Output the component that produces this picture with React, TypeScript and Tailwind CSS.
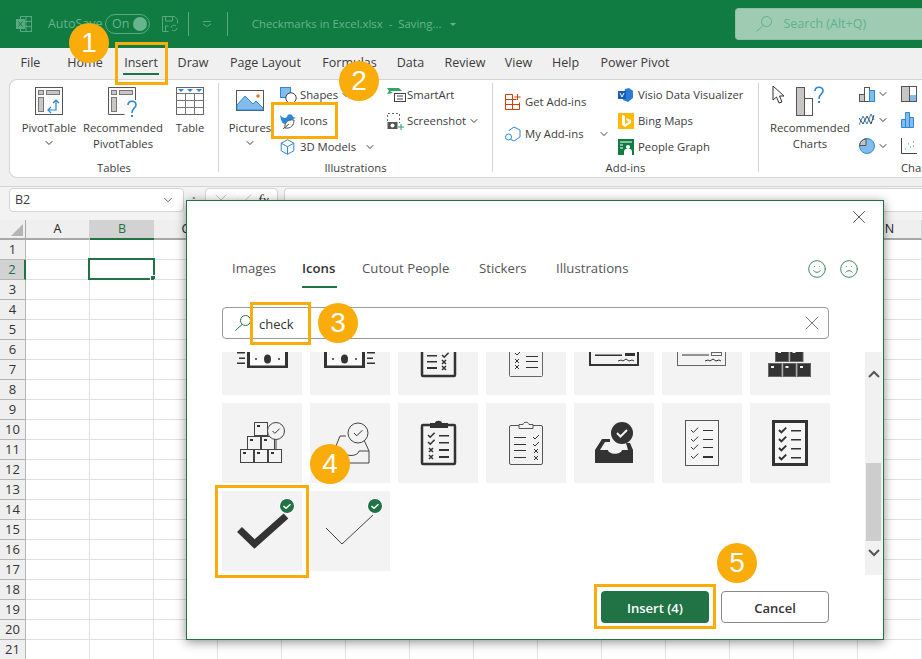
import { Check, ChevronDown, Frown, Smile, X } from "lucide-react";
import type { ReactNode } from "react";

const DARK = "#333333";

const tabs = [
  { label: "File", cls: "w-[19px] ml-[21px]" },
  { label: "Home", cls: "w-[34px] ml-[28px]" },
  { label: "Insert", cls: "w-[36px] ml-[21px]" },
  { label: "Draw", cls: "w-[30px] ml-[19px]" },
  { label: "Page Layout", cls: "w-[71px] ml-[22px]" },
  { label: "Formulas", cls: "w-[53px] ml-[22px]" },
  { label: "Data", cls: "w-[27px] ml-[21px]" },
  { label: "Review", cls: "w-[40px] ml-[21px]" },
  { label: "View", cls: "w-[27px] ml-[20px]" },
  { label: "Help", cls: "w-[27px] ml-[20px]" },
  { label: "Power Pivot", cls: "w-[68px] ml-[22px]" },
];

const columns = ["A", "B", "C", "D", "E", "F", "G", "H", "I", "J", "K", "L", "M", "N"];
const rows = Array.from({ length: 21 }, (_, i) => i + 1);

const Tick = ({ x, y, s = 1, w = 1 }: { x: number; y: number; s?: number; w?: number }) => (
  <path d={`M${x} ${y}l${2 * s} ${2 * s}l${4 * s} ${-4 * s}`} fill="none" stroke={DARK} strokeWidth={w} />
);

const Cross = ({ x, y, w = 1 }: { x: number; y: number; w?: number }) => (
  <path d={`M${x} ${y}l4 4M${x + 4} ${y}l-4 4`} fill="none" stroke={DARK} strokeWidth={w} />
);

const Bar = ({ x, y, l, h = 1 }: { x: number; y: number; l: number; h?: number }) => (
  <rect x={x} y={y} width={l} height={h} fill={DARK} />
);

const Cell = ({ children }: { children?: ReactNode }) => (
  <div className="w-20 h-20 bg-[#f3f3f3]">
    <svg viewBox="0 0 80 80" className="w-20 h-20">
      {children}
    </svg>
  </div>
);

const Badge = () => (
  <>
    <circle cx="65" cy="15" r="8" fill="#ffffff" />
    <circle cx="65" cy="15" r="7" fill="#217346" />
    <path d="M61.5 15l2.5 2.3 4.5-4" fill="none" stroke="#ffffff" strokeWidth="1.4" />
  </>
);

const Box = ({ x, y, fill = false }: { x: number; y: number; fill?: boolean }) => (
  <>
    <rect x={x + 0.5} y={y + 0.5} width="13" height="13" fill={fill ? DARK : "none"} stroke={fill ? "#666666" : "#444444"} />
    <rect x={x + 3} y={y + 3} width="3" height="2" fill={fill ? "#eeeeee" : DARK} />
  </>
);

const Glass = ({ stroke, cls }: { stroke: string; cls: string }) => (
  <svg width="16" height="16" viewBox="0 0 16 16" className={cls} fill="none" stroke={stroke}>
    <circle cx="10.5" cy="5.5" r="5" />
    <path d="M7 9.500L.5 15.500" />
  </svg>
);

const PivotIcon = () => (
  <svg width="28" height="28" viewBox="0 0 28 28">
    <rect x="0.5" y="0.5" width="27" height="27" fill="#fafafa" stroke="#555555" />
    <rect x="3.5" y="3.5" width="5" height="4" fill="#c8c6c4" stroke="#777777" />
    <rect x="11.5" y="3.5" width="13" height="4" fill="#c8c6c4" stroke="#777777" />
    <rect x="3.5" y="10.5" width="5" height="14" fill="#c8c6c4" stroke="#777777" />
    <path d="M13 23h8v-10M18 16l3-3 3 3M16 20l-3 3 3 3" fill="none" stroke="#2b88d8" strokeWidth="1.2" />
  </svg>
);

const RecPivotIcon = () => (
  <svg width="30" height="32" viewBox="0 0 30 32">
    <path d="M27.5 13V.5H.5v27h16" fill="#fafafa" stroke="#555555" />
    <rect x="3.5" y="3.5" width="5" height="4" fill="#c8c6c4" stroke="#777777" />
    <rect x="11.5" y="3.5" width="13" height="4" fill="#c8c6c4" stroke="#777777" />
    <rect x="3.5" y="10.5" width="5" height="14" fill="#c8c6c4" stroke="#777777" />
    <path d="M20 18c0-5 8-5 8 0 0 3-4 3-4 8" fill="none" stroke="#2b88d8" strokeWidth="1.6" />
    <rect x="23" y="28" width="2" height="2" fill="#2b88d8" />
  </svg>
);

const TableIcon = () => (
  <svg width="28" height="28" viewBox="0 0 28 28">
    <rect x="0.5" y="0.5" width="27" height="27" fill="#ffffff" stroke="#666666" />
    <path d="M.5 6.5h27M.5 13.5h27M.5 20.5h27M9.5 6v22M18.5 6v22" stroke="#777777" fill="none" />
    <path d="M2 2h6l-3 3zM11 2h6l-3 3zM20 2h6l-3 3z" fill="#2b88d8" />
  </svg>
);

const PicturesIcon = () => (
  <svg width="28" height="22" viewBox="0 0 28 22">
    <rect x="0.5" y="0.5" width="27" height="20" fill="#ffffff" stroke="#555555" />
    <path d="M1 20V15l8-9 8 8 3-3 7 7v2z" fill="#83bbeb" stroke="#2b88d8" />
    <circle cx="22" cy="6" r="1.8" fill="#e8792b" />
  </svg>
);

const ShapesIcon = () => (
  <svg width="17" height="17" viewBox="0 0 17 17">
    <rect x="0.5" y="0.5" width="10" height="10" fill="#83bbeb" stroke="#2b88d8" />
    <circle cx="11" cy="11" r="5.2" fill="#ffffff" stroke="#444444" />
  </svg>
);

const BirdIcon = () => (
  <svg width="16" height="16" viewBox="0 0 16 16">
    <path d="M0 2c2 2 3 3 5 3l2-1c0-3 5-4 6 0l3 1-3 1c0 3-2 5-5 5H5C2 11 1 7 0 2z" fill="#2b88d8" />
    <path d="M5 15c-1-4 2-9 9-8 0 5-3 9-9 8zM3 16l6-5" fill="#ffffff" stroke="#555555" />
  </svg>
);

const CubeIcon = () => (
  <svg width="15" height="16" viewBox="0 0 15 16">
    <path d="M7.5.7l6.3 3.5v7.6l-6.3 3.5-6.3-3.5V4.2zM1.2 4.2l6.3 3.5 6.3-3.5M7.5 7.7v7.6" fill="none" stroke="#2b88d8" />
  </svg>
);

const SmartArtIcon = () => (
  <svg width="20" height="16" viewBox="0 0 20 16">
    <path d="M0 1h12l3 3H3l3 2-6 1 2-3z" fill="#33a36a" />
    <rect x="7.5" y="6.5" width="11" height="8" fill="#ffffff" stroke="#444444" />
    <path d="M10 9h6M10 12h6" stroke="#444444" />
  </svg>
);

const ScreenshotIcon = () => (
  <svg width="17" height="17" viewBox="0 0 17 17">
    <path d="M.5 8V.5h12V10" fill="none" stroke="#666666" strokeDasharray="2 2" />
    <rect x="0.5" y="9" width="10" height="7" fill="#555555" />
    <circle cx="5.5" cy="12.5" r="2" fill="#ffffff" />
    <path d="M14 11v6M11 14h6" stroke="#21a366" />
  </svg>
);

const GetAddIcon = () => (
  <svg width="16" height="16" viewBox="0 0 16 16">
    <path d="M11.5 5.5h-11v10h14v-7M.5 10.5h14M7.5 5.5v10M7.5 5.5V.5h-7v5" fill="none" stroke="#d83b01" />
    <path d="M12.5 0v6M9.5 3h6" stroke="#d83b01" />
  </svg>
);

const MyAddIcon = () => (
  <svg width="16" height="16" viewBox="0 0 16 16">
    <path d="M4 5V4.5L9 1l6 3v7l-6 4-3-1.5" fill="none" stroke="#2b88d8" />
    <circle cx="3.5" cy="11" r="3" fill="#ffffff" stroke="#2b88d8" />
  </svg>
);

const VisioIcon = () => (
  <svg width="15" height="14" viewBox="0 0 15 14">
    <path d="M7 1l4-1 4 3v7l-5 4-5-2z" fill="#2b7cd3" />
    <rect x="0" y="3" width="8" height="8" fill="#185abd" />
    <path d="M2 5l2 4 2-4" stroke="#ffffff" fill="none" />
  </svg>
);

const BingIcon = () => (
  <svg width="16" height="16" viewBox="0 0 16 16">
    <rect width="16" height="16" fill="#ffb900" />
    <path d="M4 2l3 1v8l4-2-2-1-1-3 5 2v3l-6 4-3-2z" fill="#ffffff" />
  </svg>
);

const PeopleIcon = () => (
  <svg width="16" height="16" viewBox="0 0 16 16">
    <rect width="16" height="16" fill="#107c41" />
    <path d="M2 3h12M2 6h3M2 9h3" stroke="#ffffff" />
    <circle cx="10" cy="8" r="2" fill="#ffffff" />
    <path d="M6 16v-3c0-2 1-3 2-3h4c1 0 2 1 2 3v3z" fill="#ffffff" />
  </svg>
);

const CursorIcon = () => (
  <svg width="14" height="22" viewBox="0 0 14 22" className="shrink-0">
    <path d="M1 1v14l3.5-3 2.5 6 3-1-2.5-6H12z" fill="#ffffff" stroke="#333333" />
  </svg>
);

const RecChartIcon = () => (
  <svg width="30" height="30" viewBox="0 0 30 30" className="mt-[1px]">
    <rect x="0.5" y="1.5" width="8" height="28" fill="#c8c6c4" stroke="#555555" />
    <rect x="8.5" y="12.5" width="8" height="17" fill="#ffffff" stroke="#555555" />
    <path d="M19 5c0-5 8-5 8 0 0 3-4 3-4 8" fill="none" stroke="#2b88d8" strokeWidth="1.6" />
    <rect x="22" y="15" width="2" height="2" fill="#2b88d8" />
  </svg>
);

const ColumnChartIcon = () => (
  <svg width="16" height="16" viewBox="0 0 16 16">
    <rect x="0.5" y="8.5" width="5" height="7" fill="#c8c6c4" stroke="#555555" />
    <rect x="5.5" y="1.5" width="5" height="14" fill="#ffffff" stroke="#555555" />
    <rect x="10.5" y="4.5" width="5" height="11" fill="#83bbeb" stroke="#2b88d8" />
  </svg>
);

const LineChartIcon = () => (
  <svg width="16" height="16" viewBox="0 0 16 14">
    <path d="M0 12L4 3l4 8 4-10 3 6" fill="none" stroke="#2b88d8" />
    <path d="M0 5l4 6 4-8 4 8 3-9" fill="none" stroke="#444444" />
  </svg>
);

const PieChartIcon = () => (
  <svg width="16" height="16" viewBox="0 0 16 16">
    <circle cx="8" cy="8" r="7.5" fill="#83bbeb" stroke="#2b88d8" />
    <path d="M7 1a7 7 0 0 0-6.5 6.5H7z" fill="#c8c6c4" stroke="#555555" />
  </svg>
);

const TreeIcon = () => (
  <svg width="16" height="16" viewBox="0 0 16 16">
    <rect x="0.5" y="0.5" width="15" height="15" fill="#ffffff" stroke="#555555" />
    <rect x="1" y="1" width="7" height="14" fill="#c8c6c4" />
    <rect x="8" y="9" width="7" height="6" fill="#83bbeb" />
    <path d="M8.5 1v14" stroke="#555555" />
  </svg>
);

const HistIcon = () => (
  <svg width="14" height="16" viewBox="0 0 14 16">
    <path d="M.5 15.5v-8h4v-3h0v-4h4v5h4v10z" fill="#83bbeb" stroke="#2b88d8" />
    <path d="M4.5 7v8M8.5 5v10" stroke="#2b88d8" />
  </svg>
);

const ScatterIcon = () => (
  <svg width="16" height="16" viewBox="0 0 16 16">
    <path d="M.5 0v15.5H16" fill="none" stroke="#444444" />
    <path d="M4 11h1M7 6h1M9 9h1M12 4h1M12 8h1" stroke="#2b88d8" />
  </svg>
);

const Small = ({ icon, label, chevron, cls }: { icon: ReactNode; label: string; chevron?: string; cls: string }) => (
  <div className={`flex items-center ${cls}`}>
    <div className="w-5 flex shrink-0">{icon}</div>
    <span className="whitespace-nowrap">{label}</span>
    {chevron && <ChevronDown className={`w-3 h-3 ${chevron}`} strokeWidth={2} />}
  </div>
);

const Large = ({ icon, lines, cls, chevron }: { icon: ReactNode; lines: string[]; cls: string; chevron?: boolean }) => (
  <div className={`flex flex-col items-center pt-[7px] shrink-0 ${cls}`}>
    <div className="h-[33px] flex items-start justify-center">{icon}</div>
    {lines.map((line) => (
      <div key={line} className="h-4 leading-4 whitespace-nowrap">
        {line}
      </div>
    ))}
    {chevron && <ChevronDown className="w-3 h-3 mt-[1px]" strokeWidth={2} />}
  </div>
);

const Group = ({ cls, label, children }: { cls: string; label: string; children: ReactNode }) => (
  <div className={`flex flex-col shrink-0 ${cls}`}>
    <div className="flex h-20">{children}</div>
    <div className="h-4 leading-4 text-center">{label}</div>
  </div>
);

const Divider = () => <div className="w-px h-[89px] mt-[3px] bg-[#d4d4d4] shrink-0" />;

const Numbered = ({ n, cls }: { n: number; cls: string }) => (
  <div
    className={`absolute z-30 w-10 h-10 rounded-full bg-[#f9ac0a] text-white flex items-center justify-center text-[28px] font-['Liberation_Sans',sans-serif] ${cls}`}
  >
    {n}
  </div>
);

const Frame = ({ cls }: { cls: string }) => <div className={`absolute z-20 border-[3px] border-[#f9ac0a] ${cls}`} />;

function App() {
  return (
    <div className="relative w-[922px] h-[659px] overflow-hidden bg-white text-[#3b3b3b] text-[11.3px] font-['Open_Sans',sans-serif]">
      {/* title bar */}
      <div className="h-12 bg-[#107c41] flex items-center text-[#67b48f] text-[12.5px]">
        <svg width="16" height="16" viewBox="0 0 16 16" className="ml-4">
          <rect x="4.5" y="0.5" width="11" height="15" fill="none" stroke="#5aa983" />
          <path d="M4 5.5h11M4 10.5h11M10 1v14" stroke="#5aa983" />
          <rect x="0" y="3" width="9" height="10" fill="#5aa983" />
          <path d="M2.5 5.5l4 5M6.5 5.5l-4 5" stroke="#107c41" />
        </svg>
        <span className="ml-4 w-[50px] whitespace-nowrap">AutoSave</span>
        <div className="ml-[7px] w-[45px] h-5 rounded-full border border-[#5aa983] flex items-center justify-between pl-[6px] pr-[2px] text-[12.5px]">
          <span>On</span>
          <span className="w-[14px] h-[14px] rounded-full bg-[#67b48f]" />
        </div>
        <svg width="16" height="16" viewBox="0 0 16 16" className="ml-3" fill="none" stroke="#5aa983">
          <path d="M.5.5h12l3 3v4M.5.5v15h6M3.5 1v4h7V1M3.5 15v-5h3" />
          <path d="M9 12a3 3 0 0 1 5-2M15 12a3 3 0 0 1-5 2" />
        </svg>
        <div className="ml-[10px] w-px h-6 bg-[#5aa983]" />
        <svg width="8" height="6" viewBox="0 0 8 6" className="ml-[14px]" fill="none" stroke="#5aa983">
          <path d="M0 .5h8M0 3l4 2.5L8 3" />
        </svg>
        <div className="ml-[16px] w-px h-6 bg-[#5aa983]" />
        <span className="ml-6 w-[190px] whitespace-nowrap text-[11.4px]">Checkmarks in Excel.xlsx&nbsp; -&nbsp; Saving...</span>
        <svg width="6" height="3" viewBox="0 0 6 3" className="ml-[8px]">
          <path d="M0 0h6L3 3z" fill="#67b48f" />
        </svg>
        <div className="ml-[279px] w-[188px] h-8 bg-[#9fcbb3] rounded-l border border-[#8dc0a4] border-r-0 flex items-center pl-[20px] text-[#5cb38a]">
          <Glass stroke="#5cb38a" cls="shrink-0" />
          <span className="ml-[12px] pt-[1px]">Search (Alt+Q)</span>
        </div>
      </div>

      {/* ribbon tabs */}
      <div className="bg-[#f0f0f0]">
        <div className="h-[31px] flex text-[12.5px]">
          {tabs.map((tab) => (
            <div key={tab.label} className={`relative shrink-0 text-center whitespace-nowrap pt-[6px] flex justify-center ${tab.cls}`}>
              {tab.label}
              {tab.label === "Insert" && <div className="absolute left-0 right-0 top-[25px] h-[2px] bg-[#217346]" />}
            </div>
          ))}
        </div>

        {/* ribbon */}
        <div className="ml-[9px] h-[99px] bg-white rounded-l-lg border border-r-0 border-[#d4d4d4] flex overflow-hidden">
          <Group cls="w-[208px]" label="Tables">
            <Large cls="ml-[9px] w-[60px]" icon={<PivotIcon />} lines={["PivotTable"]} chevron />
            <Large cls="w-[88px]" icon={<RecPivotIcon />} lines={["Recommended", "PivotTables"]} />
            <Large cls="w-[46px]" icon={<TableIcon />} lines={["Table"]} />
          </Group>
          <Divider />
          <Group cls="w-[273px]" label="Illustrations">
            <Large cls="ml-[6px] w-[50px]" icon={<div className="pt-[3px]"><PicturesIcon /></div>} lines={["Pictures"]} chevron />
            <div className="ml-[5px] w-[107px] pt-[2px]">
              <Small cls="h-[26px]" icon={<ShapesIcon />} label="Shapes" chevron="ml-[2px]" />
              <Small cls="h-[26px]" icon={<BirdIcon />} label="Icons" />
              <Small cls="h-[26px]" icon={<CubeIcon />} label="3D Models" chevron="ml-[8px]" />
            </div>
            <div className="pt-[2px]">
              <Small cls="h-[26px]" icon={<SmartArtIcon />} label="SmartArt" />
              <Small cls="h-[26px]" icon={<ScreenshotIcon />} label="Screenshot" chevron="ml-[2px]" />
            </div>
          </Group>
          <Divider />
          <Group cls="w-[265px]" label="Add-ins">
            <div className="ml-[12px] w-[113px] pt-[6px]">
              <div className="h-8 flex items-center gap-[4px]">
                <GetAddIcon />
                <span className="whitespace-nowrap">Get Add-ins</span>
              </div>
              <div className="h-8 flex items-center gap-[4px]">
                <MyAddIcon />
                <span className="whitespace-nowrap">My Add-ins</span>
                <ChevronDown className="w-3 h-3 ml-[10px]" strokeWidth={2} />
              </div>
            </div>
            <div className="pt-[2px]">
              <Small cls="h-[26px]" icon={<VisioIcon />} label="Visio Data Visualizer" />
              <Small cls="h-[26px]" icon={<BingIcon />} label="Bing Maps" />
              <Small cls="h-[26px]" icon={<PeopleIcon />} label="People Graph" />
            </div>
          </Group>
          <Divider />
          <div className="flex flex-col shrink-0">
            <div className="flex h-20">
              <div className="w-[84px] ml-[9px] flex flex-col items-center pt-[5px] shrink-0">
                <div className="h-[35px] w-full flex gap-[10px] pl-[4px]">
                  <CursorIcon />
                  <RecChartIcon />
                </div>
                <div className="h-4 leading-4 whitespace-nowrap">Recommended</div>
                <div className="h-4 leading-4">Charts</div>
              </div>
              <div className="ml-[7px] pt-[1px] w-[42px] shrink-0">
                <Small cls="h-[26px]" icon={<ColumnChartIcon />} label="" chevron="-ml-[2px]" />
                <Small cls="h-[26px]" icon={<LineChartIcon />} label="" chevron="-ml-[2px]" />
                <Small cls="h-[26px]" icon={<PieChartIcon />} label="" chevron="-ml-[2px]" />
              </div>
              <div className="pt-[1px] w-5 shrink-0">
                <div className="h-[26px] flex items-center"><TreeIcon /></div>
                <div className="h-[26px] flex items-center"><HistIcon /></div>
                <div className="h-[26px] flex items-center"><ScatterIcon /></div>
              </div>
            </div>
            <div className="h-4 leading-4 pl-[142px]">Charts</div>
          </div>
        </div>

        {/* formula bar */}
        <div className="h-[8px]" />
        <div className="h-[34px] border-t border-[#d4d4d4] flex items-start pt-[1px] bg-[#f3f3f3] text-[12.5px]">
          <div className="ml-[9px] w-[175px] h-6 bg-white rounded border border-[#d4d4d4] flex items-center justify-between pl-[5px] pr-[8px]">
            <span>B2</span>
            <ChevronDown className="w-[14px] h-[14px] text-[#555555]" strokeWidth={1.5} />
          </div>
          <span className="ml-[8px] w-[13px] leading-6 font-bold text-[#888888]">:</span>
          <div className="w-[73px] h-6 bg-white rounded border border-[#d4d4d4] flex items-center pl-[5px] text-[#bbbbbb]">
            <X className="w-5 h-5" strokeWidth={1} />
            <Check className="ml-[3px] w-5 h-5" strokeWidth={1} />
            <span className="ml-[4px] italic font-['Liberation_Serif',serif] text-[15px] text-[#333333]">fx</span>
          </div>
          <div className="ml-[6px] flex-1 h-6 bg-white rounded-l border border-r-0 border-[#d4d4d4]" />
        </div>
      </div>

      {/* sheet */}
      <div className="text-[12.5px]">
        <div className="flex h-5">
          <div className="w-[26px] h-5 bg-[#efefef] border-r border-b-2 border-[#a8a8a8] shrink-0 flex items-end justify-end pr-[2px] pb-[2px]">
            <div className="w-0 h-0 border-l-[12px] border-b-[12px] border-l-transparent border-b-[#b5b5b5]" />
          </div>
          {columns.map((col) => (
            <div
              key={col}
              className={
                col === "B"
                  ? "w-16 h-5 shrink-0 text-center leading-[18px] bg-[#d2d2d2] border-b-2 border-[#217346] text-[#217346]"
                  : "w-16 h-5 shrink-0 text-center leading-[18px] bg-[#efefef] border-r border-b-2 border-r-[#d4d4d4] border-b-[#a8a8a8] text-[#222222]"
              }
            >
              {col}
            </div>
          ))}
        </div>
        {rows.map((row) => (
          <div key={row} className="relative flex h-5">
            <div
              className={
                row === 2
                  ? "w-[26px] h-5 shrink-0 text-center leading-[18px] text-[13px] bg-[#d2d2d2] border-r-2 border-b border-r-[#217346] border-b-[#b5b5b5] text-[#217346]"
                  : "w-[26px] h-5 shrink-0 text-center leading-[18px] text-[13px] bg-[#efefef] border-r border-b border-[#b5b5b5] text-[#333333]"
              }
            >
              {row}
            </div>
            {columns.map((col) => (
              <div key={col} className="relative w-16 h-5 shrink-0 border-r border-b border-[#e0e0e0]">
                {row === 2 && col === "B" && (
                  <div className="absolute -left-[2px] -top-[2px] w-[67px] h-[22px] border-2 border-[#217346]">
                    <div className="absolute -right-[3px] -bottom-[3px] w-[6px] h-[6px] bg-[#217346] border border-white" />
                  </div>
                )}
              </div>
            ))}
          </div>
        ))}
      </div>

      {/* icons dialog */}
      <div className="absolute z-10 left-[186px] top-[200px] w-[698px] h-[440px] bg-white border border-[#217346] shadow-[0_2px_10px_rgba(0,0,0,0.45)] flex flex-col">
        <div className="h-[31px] flex justify-end items-center pt-[1px] pr-[13px]">
          <X className="w-[22px] h-[22px] text-[#333333]" strokeWidth={0.9} />
        </div>
        <div className="h-[56px] pl-[45px] pr-[24px] flex items-start pt-[27px] text-[13.2px] text-[#555555]">
          <span className="w-[70px]">Images</span>
          <div className="w-[60px] relative font-semibold text-[#333333]">
            Icons
            <div className="absolute left-0 w-[35px] top-[27px] h-[2px] bg-[#217346]" />
          </div>
          <span className="w-[117px]">Cutout People</span>
          <span className="w-[77px]">Stickers</span>
          <span>Illustrations</span>
          <div className="ml-auto flex gap-3 text-[#217346]">
            <Smile className="w-5 h-5" strokeWidth={1} />
            <Frown className="w-5 h-5" strokeWidth={1} />
          </div>
        </div>
        <div className="ml-[35px] w-[607px] h-8 mt-[19px] rounded-sm border border-[#9a9a9a] flex items-center text-[13px] text-[#333333] shrink-0">
          <Glass stroke="#217346" cls="ml-[12px] shrink-0" />
          <span className="ml-[8px] pt-[3px]">check</span>
          <X className="ml-auto mr-[4px] w-6 h-6 text-[#555555]" strokeWidth={0.8} />
        </div>
        <div className="mt-[13px] h-[223px] flex shrink-0">
          <div className="w-[678px] pl-[35px] overflow-hidden">
            <div className="grid grid-cols-[repeat(7,80px)] gap-2 -mt-[37px]">
              <Cell>
                <rect x="25" y="28" width="41" height="25" fill="#333" />
                <rect x="28" y="31" width="35" height="19.5" fill="#fafafa" />
                <ellipse cx="45.5" cy="44" rx="3.5" ry="4.5" fill="#333" />
                <circle cx="34" cy="44" r="1" fill="#333" />
                <circle cx="57" cy="44" r="1" fill="#333" />
                <Bar x={15} y={37} l={8} h={1.5} />
                <Bar x={17} y={42.5} l={6} h={1.5} />
                <Bar x={15} y={47.5} l={8} h={1.5} />
              </Cell>
              <Cell>
                <rect x="14" y="28" width="41" height="25" fill="#333" />
                <rect x="17" y="31" width="35" height="19.5" fill="#fafafa" />
                <ellipse cx="34.5" cy="44" rx="3.5" ry="4.5" fill="#333" />
                <circle cx="23" cy="44" r="1" fill="#333" />
                <circle cx="46" cy="44" r="1" fill="#333" />
                <Bar x={57} y={37} l={8} h={1.5} />
                <Bar x={57} y={42.5} l={6} h={1.5} />
                <Bar x={57} y={47.5} l={8} h={1.5} />
              </Cell>
              <Cell>
                <rect x="24" y="22" width="33" height="39" rx="1" fill="none" stroke="#333" strokeWidth="2.5" />
                <Bar x={29} y={40} l={10} h={1.5} />
                <Bar x={29} y={46} l={10} h={1.5} />
                <Bar x={29} y={52} l={10} h={2} />
                <Tick x={44} y={40} s={1.1} w={1.6} />
                <Cross x={44} y={45} w={1.5} />
                <Cross x={44} y={51} w={1.5} />
              </Cell>
              <Cell>
                <rect x="23.5" y="22" width="33" height="39.5" rx="1" fill="none" stroke="#666" />
                <Tick x={29} y={38} />
                <Cross x={29} y={44} />
                <Cross x={29} y={50} />
                <Bar x={40} y={41} l={12} />
                <Bar x={40} y={46} l={12} />
                <Bar x={40} y={52} l={12} />
              </Cell>
              <Cell>
                <rect x="16" y="26" width="48" height="24" fill="none" stroke="#333" strokeWidth="2" />
                <Bar x={21} y={39.5} l={27} h={1.5} />
                <rect x="51" y="38" width="10" height="3" fill="#333" />
                <path d="M44 46l3-1 2 1 3-2 3 2 3-1 2 1" fill="none" stroke="#333" />
              </Cell>
              <Cell>
                <rect x="15.5" y="26" width="48" height="24.5" fill="none" stroke="#666" />
                <Bar x={20} y={39.5} l={27} h={1} />
                <rect x="49.5" y="37.5" width="10" height="3" fill="none" stroke="#666" />
                <path d="M43 46l3-1 2 1 3-2 3 2 3-1 2 1" fill="none" stroke="#333" />
              </Cell>
              <Cell>
                <Box x={25} y={33} fill />
                <Box x={39.5} y={33} fill />
                <Box x={18} y={48} fill />
                <Box x={32.5} y={48} fill />
                <Box x={47} y={48} fill />
              </Cell>

              <Cell>
                <Box x={32} y={19} />
                <Box x={25} y={33} />
                <Box x={39} y={33} />
                <Box x={18} y={46} />
                <Box x={32} y={46} />
                <Box x={46} y={46} />
                <path d="M54 37v9" stroke="#444" />
                <circle cx="54" cy="28" r="8.5" fill="#f3f3f3" stroke="#444" />
                <Tick x={50.5} y={28} s={1.2} w={1} />
              </Cell>
              <Cell>
                <path d="M36 33h-6l-6 15v12h35V48l-5-11M24 48h9c1 6 15 6 16 0h10" fill="none" stroke="#444" />
                <circle cx="48" cy="30" r="10" fill="#f3f3f3" stroke="#444" />
                <Tick x={44} y={30} s={1.4} w={1} />
              </Cell>
              <Cell>
                <rect x="24" y="22" width="33" height="39" rx="1" fill="none" stroke="#333" strokeWidth="2.5" />
                <path d="M32 20h5c0-3 7-3 7 0h6v5H32z" fill="#333" />
                <Tick x={30} y={32} s={1.1} w={1.6} />
                <Tick x={30} y={39} s={1.1} w={1.6} />
                <Cross x={31} y={45} w={1.5} />
                <Cross x={31} y={52} w={1.5} />
                <Bar x={41} y={32} l={10} h={1.5} />
                <Bar x={41} y={39} l={10} h={1.5} />
                <Bar x={41} y={46} l={10} h={2} />
                <Bar x={41} y={53} l={10} h={2} />
              </Cell>
              <Cell>
                <rect x="23.5" y="22.5" width="33" height="39" rx="1.5" fill="none" stroke="#555" />
                <path d="M33 25.5v-4h4c0-3 6-3 6 0h4v4z" fill="#f3f3f3" stroke="#555" />
                <Bar x={28} y={34} l={12} />
                <Bar x={28} y={41} l={12} />
                <Bar x={28} y={47} l={12} />
                <Bar x={28} y={54} l={12} />
                <Tick x={47} y={34} />
                <Tick x={47} y={41} />
                <Cross x={48} y={46} />
                <Cross x={48} y={53} />
              </Cell>
              <Cell>
                <path d="M21 60V47l7-11h8v3h-5l-5 8h8c1 5 13 5 14 0h6l-2-7h4l3 7v13z" fill="#333" />
                <circle cx="48" cy="30" r="11" fill="#333" />
                <path d="M43 30l3.5 3.5 6.5-6.5" fill="none" stroke="#f3f3f3" strokeWidth="2" />
              </Cell>
              <Cell>
                <rect x="23.5" y="17.5" width="33" height="45" fill="#f6f6f6" stroke="#555" />
                <Tick x={29} y={27} s={1.2} />
                <Tick x={29} y={36} s={1.2} />
                <Tick x={29} y={44} s={1.2} />
                <Tick x={29} y={53} s={1.2} />
                <Bar x={41} y={27} l={10} />
                <Bar x={41} y={36} l={10} />
                <Bar x={41} y={44} l={10} />
                <Bar x={41} y={53} l={10} h={2} />
              </Cell>
              <Cell>
                <rect x="23.5" y="18.5" width="33" height="43" fill="#f6f6f6" stroke="#333" strokeWidth="3" />
                <Tick x={29} y={27} s={1.2} w={2} />
                <Tick x={29} y={36} s={1.2} w={2} />
                <Tick x={29} y={45} s={1.2} w={2} />
                <Tick x={29} y={54} s={1.2} w={2} />
                <Bar x={41} y={27} l={10} h={1.5} />
                <Bar x={41} y={36} l={10} h={1.5} />
                <Bar x={41} y={45} l={10} h={1.5} />
                <Bar x={41} y={54} l={10} h={1.5} />
              </Cell>

              <Cell>
                <path d="M17.5 38.5L32.5 53 64 25" fill="none" stroke="#333" strokeWidth="7" />
                <Badge />
              </Cell>
              <Cell>
                <path d="M16 37l16 16 31-29" fill="none" stroke="#444" />
                <Badge />
              </Cell>
            </div>
          </div>
          <div className="w-[17px] bg-[#f1f1f1] flex flex-col items-center">
            <svg width="12" height="8" viewBox="0 0 12 8" className="mt-[18px]">
              <path d="M1 7l5-5 5 5" fill="none" stroke="#555555" strokeWidth="2" />
            </svg>
            <div className="mt-[85px] w-[15px] h-[78px] bg-[#cdcdcd]" />
            <svg width="12" height="8" viewBox="0 0 12 8" className="mt-[8px]">
              <path d="M1 1l5 5 5-5" fill="none" stroke="#555555" strokeWidth="2" />
            </svg>
          </div>
        </div>
        <div className="ml-[414px] mt-[16px] flex gap-3 text-[13px]">
          <div className="w-[108px] h-8 rounded-sm bg-[#217346] text-white font-semibold flex items-center justify-center pt-[3px]">Insert (4)</div>
          <div className="w-[108px] h-8 rounded-sm bg-white border border-[#8a8a8a] text-[#333333] font-semibold flex items-center justify-center pt-[3px]">Cancel</div>
        </div>
      </div>

      {/* annotations */}
      <Frame cls="left-[115px] top-[42px] w-[53px] h-[43px]" />
      <Frame cls="left-[271px] top-[102px] w-[67px] h-[37px]" />
      <Frame cls="left-[250px] top-[302px] w-[61px] h-[43px]" />
      <Frame cls="left-[215px] top-[485px] w-[94px] h-[93px]" />
      <Frame cls="left-[594px] top-[584px] w-[122px] h-[45px]" />
      <Numbered n={1} cls="left-[69px] top-[23px]" />
      <Numbered n={2} cls="left-[339px] top-[61px]" />
      <Numbered n={3} cls="left-[318px] top-[303px]" />
      <Numbered n={4} cls="left-[310px] top-[444px]" />
      <Numbered n={5} cls="left-[717px] top-[543px]" />
    </div>
  );
}

export default App;
